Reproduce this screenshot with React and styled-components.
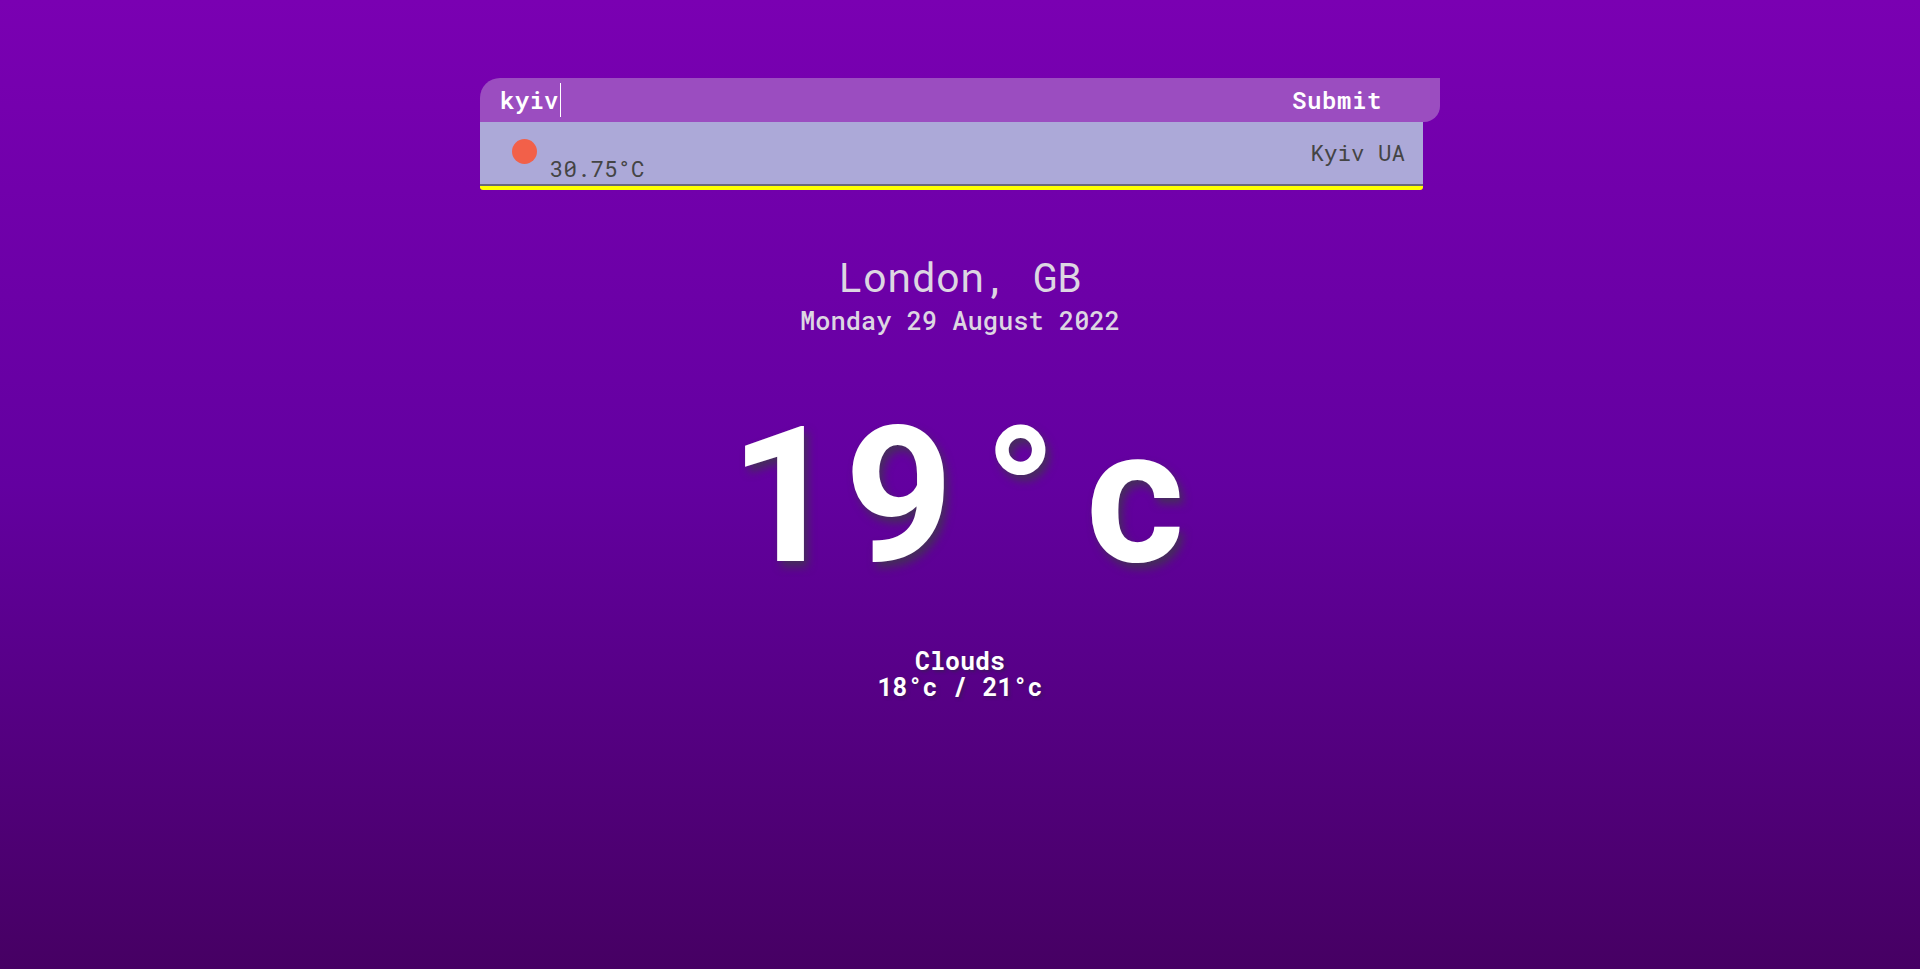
import React from "react";
import styled, { createGlobalStyle } from "styled-components";

const Global = createGlobalStyle`
  html, body { margin: 0; padding: 0; }
  body {
    min-height: 969px;
    background: linear-gradient(180deg, #7a00b2 0%, #6300a0 50%, #460063 100%);
    font-family: "Roboto Mono", "DejaVu Sans Mono", "Liberation Mono", monospace;
  }
`;

const Page = styled.div`
  min-height: 969px;
  display: flex;
  flex-direction: column;
  align-items: center;
  padding-top: 78px;
  box-sizing: border-box;
`;

const SearchWrap = styled.div`
  width: 960px;
  display: flex;
  flex-direction: column;
`;

const SearchForm = styled.form`
  height: 44px;
  display: flex;
  align-items: center;
  background: #9b4dc0;
  border-radius: 20px 0 16px 0;
  padding: 0 58px 0 20px;
  box-sizing: border-box;
  margin: 0;
`;

const Input = styled.div`
  flex: 1;
  color: #fff;
  font-weight: 600;
  font-size: 24px;
  letter-spacing: 0.3px;
  display: flex;
  align-items: center;
`;

const Caret = styled.span`
  display: inline-block;
  width: 1px;
  height: 34px;
  background: #fff;
  margin-left: 1px;
`;

const SubmitButton = styled.span`
  color: #fff;
  font-weight: 600;
  font-size: 24px;
  letter-spacing: 0.6px;
`;

const Dropdown = styled.div`
  width: 943px;
  height: 68px;
  background: #aca9d8;
  border-bottom: 4px solid #ffff00;
  border-radius: 0 0 3px 3px;
  box-shadow: inset 0 -2px 0 #6b6876;
  box-sizing: border-box;
  display: flex;
  justify-content: space-between;
  padding: 0 18px 0 32px;
`;

const Left = styled.div`
  display: flex;
  align-items: flex-start;
  padding-top: 17px;
`;

const Dot = styled.span`
  width: 25px;
  height: 25px;
  border-radius: 50%;
  background: #f26049;
`;

const Temp = styled.span`
  margin-left: 13px;
  margin-top: 16px;
  font-size: 22.5px;
  color: #444;
  line-height: 26px;
`;

const Place = styled.span`
  font-size: 22.5px;
  color: #444;
  line-height: 26px;
  padding-top: 17px;
`;

const City = styled.h1`
  margin: 64px 0 0;
  font-weight: 400;
  font-size: 40.5px;
  line-height: 46px;
  color: #ddd6e2;
`;

const DateLine = styled.div`
  font-size: 25.4px;
  font-weight: 500;
  line-height: 30px;
  color: #ddd6e2;
  margin-top: 5px;
`;

const BigTemp = styled.div`
  margin-top: 61px;
  padding-right: 6px;
  font-family: Roboto, "Noto Sans", sans-serif;
  font-weight: 700;
  font-size: 190px;
  line-height: 200px;
  color: #fff;
  text-shadow: 4px 6px 9px rgba(60, 60, 70, 0.75);
  white-space: nowrap;
`;

const Glyph = styled.span`
  letter-spacing: ${(p) => p.$space}px;
`;

const Summary = styled.div`
  margin-top: 52px;
  text-align: center;
  color: #fff;
  font-size: 25px;
  font-weight: 700;
  line-height: 26px;
  text-shadow: 2px 2px 3px rgba(40, 40, 60, 0.5);
`;

export default function App() {
  return (
    <>
      <Global />
      <Page>
        <SearchWrap>
          <SearchForm onSubmit={(e) => e.preventDefault()}>
            <Input>
              kyiv
              <Caret />
            </Input>
            <SubmitButton>Submit</SubmitButton>
          </SearchForm>
          <Dropdown>
            <Left>
              <Dot />
              <Temp>30.75°C</Temp>
            </Left>
            <Place>Kyiv UA</Place>
          </Dropdown>
        </SearchWrap>
        <City>London, GB</City>
        <DateLine>Monday 29 August 2022</DateLine>
        <BigTemp>
          <Glyph $space={6}>1</Glyph>
          <Glyph $space={30}>9</Glyph>
          <Glyph $space={28}>°</Glyph>
          <Glyph $space={0}>c</Glyph>
        </BigTemp>
        <Summary>
          <div>Clouds</div>
          <div>18°c / 21°c</div>
        </Summary>
      </Page>
    </>
  );
}
